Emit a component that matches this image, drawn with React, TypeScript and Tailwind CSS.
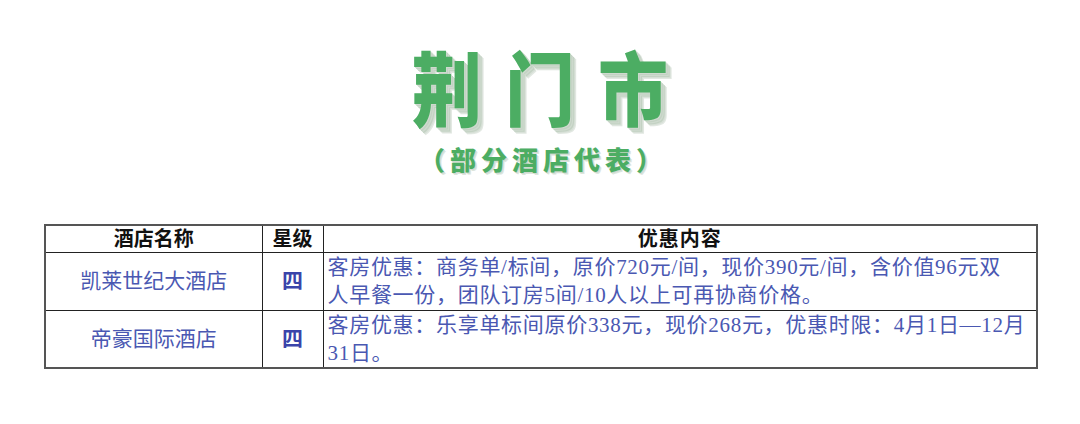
import React from "react";

const rows = [
  {
    name: "凯莱世纪大酒店",
    star: "四",
    lines: ["客房优惠：商务单/标间，原价720元/间，现价390元/间，含价值96元双", "人早餐一份，团队订房5间/10人以上可再协商价格。"],
  },
  {
    name: "帝豪国际酒店",
    star: "四",
    lines: ["客房优惠：乐享单标间原价338元，现价268元，优惠时限：4月1日—12月", "31日。"],
  },
];

const titleShadow =
  "[text-shadow:1px_1px_0_#cfdacf,2px_2px_0_#c3d2c3,3px_3px_0_#cfdacf,4px_4px_0_#c3d2c3,5px_5px_0_#d6dfd6,6px_6px_0_#e2e8e2]";

export default function App() {
  return (
    <div className="flex h-[424px] w-[1080px] flex-col bg-white font-['Liberation_Serif','Noto_Sans_CJK_SC',serif]">
      <div className="flex flex-col items-center">
        <div
          className={`mt-[50px] flex h-[70px] scale-y-[1.15] items-center pl-[23px] font-['Noto_Sans_CJK_SC',sans-serif] text-[70px] leading-none font-black tracking-[23px] text-[#4cad63] ${titleShadow}`}
        >
          荆门市
        </div>
        <div className="mt-[25px] flex h-[27px] items-center pl-[6px] font-['Noto_Sans_CJK_SC',sans-serif] text-[26px] leading-none font-black tracking-[5px] text-[#4cad63] [text-shadow:1px_1px_0_#cfdacf,2px_2px_0_#dde5dd]">
          （部分酒店代表）
        </div>
      </div>

      <table className="mt-[52px] ml-[44px] w-[992px] table-fixed border-collapse border-2 border-[#555]">
        <colgroup>
          <col className="w-[217px]" />
          <col className="w-[61px]" />
          <col className="w-[714px]" />
        </colgroup>
        <thead>
          <tr className="h-[27px]">
            <th className="border border-[#222] p-0 text-center text-[20px] leading-none font-bold text-[#111]">酒店名称</th>
            <th className="border border-[#222] p-0 text-center text-[20px] leading-none font-bold text-[#111]">星级</th>
            <th className="border border-[#222] p-0 text-center text-[20px] leading-none font-bold tracking-[1px] text-[#111]">优惠内容</th>
          </tr>
        </thead>
        <tbody>
          {rows.map((r) => (
            <tr key={r.name} className="h-[58px]">
              <td className="border border-[#222] p-0 text-center text-[21px] leading-[28px] text-[#4a58b2]">{r.name}</td>
              <td className="border border-[#222] p-0 text-center text-[21px] leading-[28px] font-bold text-[#3a44aa]">{r.star}</td>
              <td className="border border-[#222] py-0 pr-1 pl-[4px] align-top text-[21px] leading-[28px] tracking-[0.7px] text-[#4a58b2]">
                {r.lines.map((l) => (
                  <div key={l} className="whitespace-nowrap">
                    {l}
                  </div>
                ))}
              </td>
            </tr>
          ))}
        </tbody>
      </table>
    </div>
  );
}
